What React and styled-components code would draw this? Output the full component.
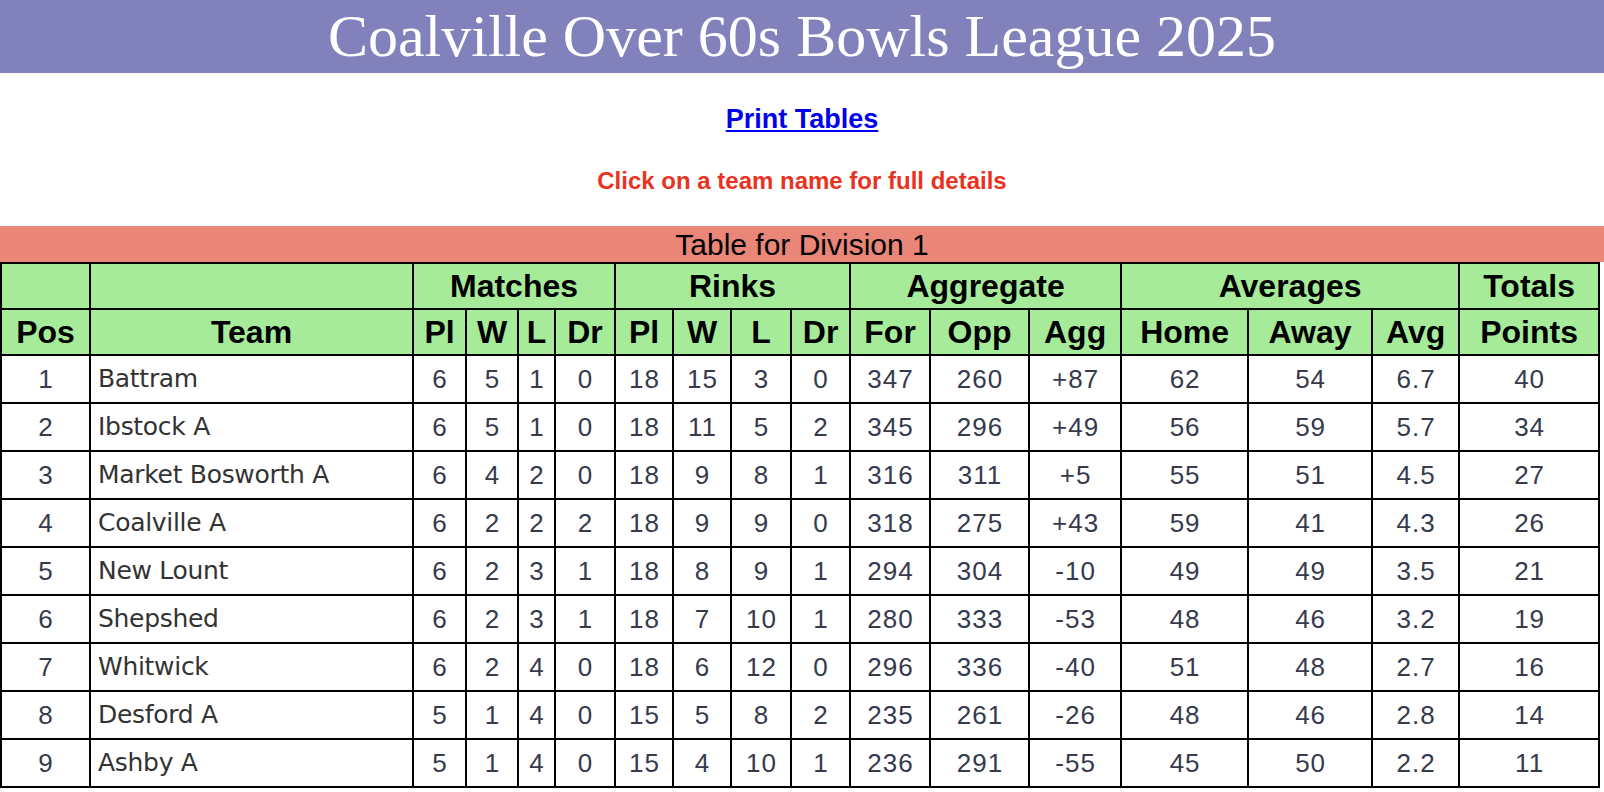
import React from "react";
import styled, { createGlobalStyle } from "styled-components";

const GlobalStyle = createGlobalStyle`
  body {
    margin: 0;
    background: #fff;
    font-family: "Liberation Sans", Arial, sans-serif;
  }
`;

const Page = styled.div`
  width: 1604px;
`;

const Banner = styled.h1`
  margin: 0;
  height: 73px;
  display: flex;
  align-items: center;
  justify-content: center;
  background-color: #8181bb;
  color: #fff;
  font-family: "Liberation Serif", "Times New Roman", serif;
  font-size: 60px;
  font-weight: normal;
  line-height: 69px;
`;

const PrintLine = styled.p`
  margin: 31px 0 0;
  text-align: center;
  font-size: 27px;
  font-weight: bold;
  line-height: 31px;
`;

const PrintLink = styled.a`
  color: #0000ee;
  text-decoration: underline;
`;

const Hint = styled.p`
  margin: 32px 0 0;
  text-align: center;
  color: #e9321f;
  font-size: 24px;
  font-weight: bold;
  line-height: 28px;
`;

const Caption = styled.div`
  margin-top: 31px;
  height: 36px;
  display: flex;
  align-items: center;
  justify-content: center;
  background-color: #e98678;
  color: #000;
  font-size: 30px;
  line-height: 35px;
`;

const Table = styled.table`
  width: 1598px;
  table-layout: fixed;
  border-collapse: collapse;
`;

const HeadCell = styled.th`
  height: 44px;
  padding: 0;
  border: 2px solid #000;
  background-color: #a6eb99;
  color: #000;
  font-size: 32px;
  font-weight: bold;
  line-height: 37px;
  text-align: center;
`;

const Cell = styled.td`
  height: 46px;
  padding: ${(p) => (p.$team ? "0 7px" : "0 0 0 1px")};
  border: 2px solid #000;
  color: ${(p) => (p.$team ? "#333" : "#353a4d")};
  font-family: ${(p) =>
    p.$team ? '"DejaVu Sans", Verdana, sans-serif' : '"Liberation Sans", Arial, sans-serif'};
  font-size: ${(p) => (p.$team ? "25px" : "26px")};
  letter-spacing: ${(p) => (p.$team ? "-0.3px" : "1px")};
  line-height: 28px;
  text-align: ${(p) => (p.$team ? "left" : "center")};
  white-space: nowrap;
`;

const TeamLink = styled.a`
  color: inherit;
  text-decoration: none;
`;

const widths = [89, 323, 53, 52, 37, 60, 58, 58, 60, 59, 80, 99, 92, 127, 124, 87, 140];

const groups = [
  { label: "", span: 1 },
  { label: "", span: 1 },
  { label: "Matches", span: 4 },
  { label: "Rinks", span: 4 },
  { label: "Aggregate", span: 3 },
  { label: "Averages", span: 3 },
  { label: "Totals", span: 1 },
];

const columns = ["Pos", "Team", "Pl", "W", "L", "Dr", "Pl", "W", "L", "Dr", "For", "Opp", "Agg", "Home", "Away", "Avg", "Points"];

const rows = [
  [1, "Battram", 6, 5, 1, 0, 18, 15, 3, 0, 347, 260, "+87", 62, 54, "6.7", 40],
  [2, "Ibstock A", 6, 5, 1, 0, 18, 11, 5, 2, 345, 296, "+49", 56, 59, "5.7", 34],
  [3, "Market Bosworth A", 6, 4, 2, 0, 18, 9, 8, 1, 316, 311, "+5", 55, 51, "4.5", 27],
  [4, "Coalville A", 6, 2, 2, 2, 18, 9, 9, 0, 318, 275, "+43", 59, 41, "4.3", 26],
  [5, "New Lount", 6, 2, 3, 1, 18, 8, 9, 1, 294, 304, "-10", 49, 49, "3.5", 21],
  [6, "Shepshed", 6, 2, 3, 1, 18, 7, 10, 1, 280, 333, "-53", 48, 46, "3.2", 19],
  [7, "Whitwick", 6, 2, 4, 0, 18, 6, 12, 0, 296, 336, "-40", 51, 48, "2.7", 16],
  [8, "Desford A", 5, 1, 4, 0, 15, 5, 8, 2, 235, 261, "-26", 48, 46, "2.8", 14],
  [9, "Ashby A", 5, 1, 4, 0, 15, 4, 10, 1, 236, 291, "-55", 45, 50, "2.2", 11],
];

const App = () => {
  return (
    <Page>
      <GlobalStyle />
      <Banner>Coalville Over 60s Bowls League 2025</Banner>
      <PrintLine>
        <PrintLink href="#">Print Tables</PrintLink>
      </PrintLine>
      <Hint>Click on a team name for full details</Hint>
      <Caption>Table for Division 1</Caption>
      <Table>
        <colgroup>
          {widths.map((w, i) => (
            <col key={i} style={{ width: w }} />
          ))}
        </colgroup>
        <thead>
          <tr>
            {groups.map((g, i) => (
              <HeadCell key={i} colSpan={g.span}>
                {g.label}
              </HeadCell>
            ))}
          </tr>
          <tr>
            {columns.map((c, i) => (
              <HeadCell key={i}>{c}</HeadCell>
            ))}
          </tr>
        </thead>
        <tbody>
          {rows.map((r) => (
            <tr key={r[0]}>
              {r.map((v, i) =>
                i === 1 ? (
                  <Cell key={i} $team>
                    <TeamLink href="#">{v}</TeamLink>
                  </Cell>
                ) : (
                  <Cell key={i}>{v}</Cell>
                )
              )}
            </tr>
          ))}
        </tbody>
      </Table>
    </Page>
  );
};

export default App;
